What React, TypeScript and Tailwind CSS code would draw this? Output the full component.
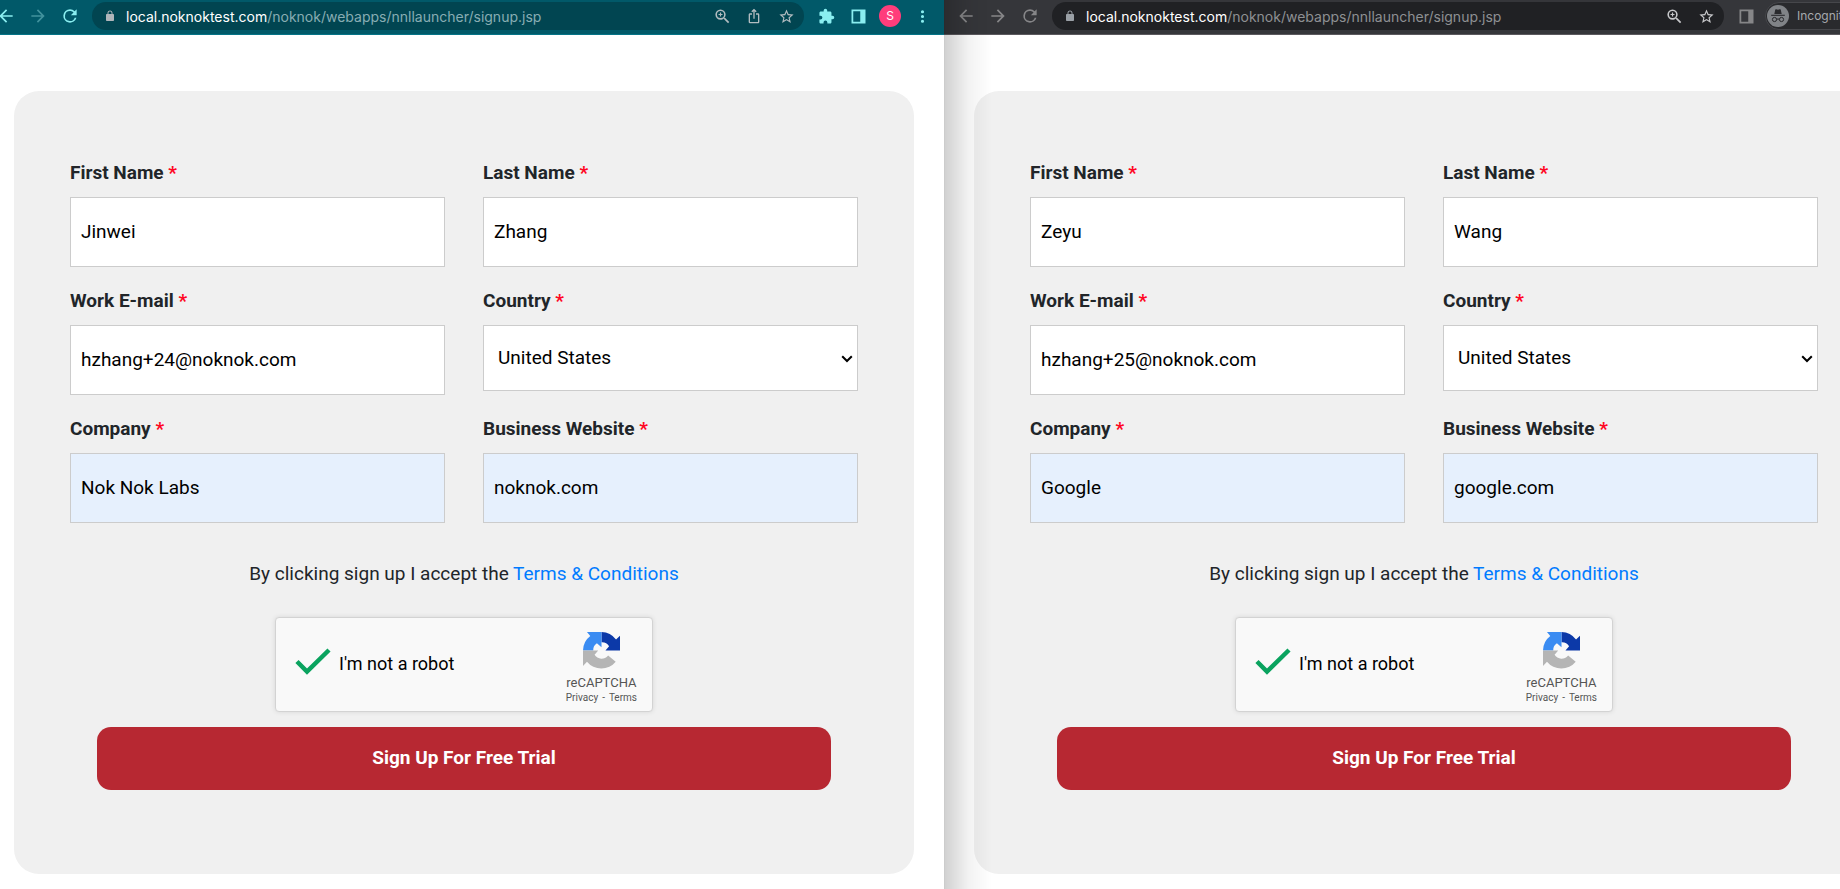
import type { ReactNode } from "react";

type FormData = {
  id: string;
  first: string;
  last: string;
  email: string;
  company: string;
  website: string;
};

const people: FormData[] = [
  {
    id: "a",
    first: "Jinwei",
    last: "Zhang",
    email: "hzhang+24@noknok.com",
    company: "Nok Nok Labs",
    website: "noknok.com",
  },
  {
    id: "b",
    first: "Zeyu",
    last: "Wang",
    email: "hzhang+25@noknok.com",
    company: "Google",
    website: "google.com",
  },
];

function Glyph({ d, className = "size-5" }: { d: string; className?: string }) {
  return (
    <svg viewBox="0 0 24 24" fill="currentColor" className={className} aria-hidden="true">
      <path d={d} />
    </svg>
  );
}

const BACK = "M20 11H7.83l5.59-5.59L12 4l-8 8 8 8 1.41-1.41L7.83 13H20z";
const FORWARD = "M12 4l-1.41 1.41L16.17 11H4v2h12.17l-5.58 5.59L12 20l8-8z";
const RELOAD =
  "M17.65 6.35A7.96 7.96 0 0 0 12 4a8 8 0 1 0 7.73 10h-2.08A6 6 0 1 1 12 6c1.66 0 3.14.69 4.22 1.78L13 11h7V4z";
const LOCK =
  "M18 8h-1V6c0-2.76-2.24-5-5-5S7 3.24 7 6v2H6c-1.1 0-2 .9-2 2v10c0 1.1.9 2 2 2h12c1.1 0 2-.9 2-2V10c0-1.1-.9-2-2-2zM8.9 6c0-1.71 1.39-3.1 3.1-3.1s3.1 1.39 3.1 3.1v2H8.9z";
const ZOOM =
  "M15.5 14h-.79l-.28-.27A6.47 6.47 0 0 0 16 9.5 6.5 6.5 0 1 0 9.5 16c1.61 0 3.09-.59 4.23-1.57l.27.28v.79l5 4.99L20.49 19zm-6 0a4.5 4.5 0 1 1 0-9 4.5 4.5 0 0 1 0 9zm.75-7h-1.5v1.75H7v1.5h1.75V12h1.5v-1.75H12v-1.5h-1.75z";
const SHARE =
  "M16 5l-1.42 1.42-1.59-1.59V16h-1.98V4.83L9.42 6.42 8 5l4-4zm4 5v11c0 1.1-.9 2-2 2H6a2 2 0 0 1-2-2V10c0-1.11.89-2 2-2h3v2H6v11h12V10h-3V8h3a2 2 0 0 1 2 2z";
const STAR =
  "M22 9.24l-7.19-.62L12 2 9.19 8.63 2 9.24l5.46 4.73L5.82 21 12 17.27 18.18 21l-1.63-7.03zM12 15.4l-3.76 2.27 1-4.28-3.32-2.88 4.38-.38L12 6.1l1.71 4.04 4.38.38-3.32 2.88 1 4.28z";
const PUZZLE =
  "M20.5 11H19V7c0-1.1-.9-2-2-2h-4V3.5a2.5 2.5 0 0 0-5 0V5H4c-1.1 0-1.99.9-1.99 2v3.8H3.5a2.7 2.7 0 0 1 0 5.4H2V20c0 1.1.9 2 2 2h3.8v-1.5a2.7 2.7 0 0 1 5.4 0V22H17c1.1 0 2-.9 2-2v-4h1.5a2.5 2.5 0 0 0 0-5z";
const PANEL = "M4 4h16v16H4zM6 6v12h8V6z";
const DOTS =
  "M12 8a2 2 0 1 0 0-4 2 2 0 0 0 0 4zm0 2a2 2 0 1 0 0 4 2 2 0 0 0 0-4zm0 6a2 2 0 1 0 0 4 2 2 0 0 0 0-4z";

function IconButton({ label, className = "", children }: { label: string; className?: string; children: ReactNode }) {
  return (
    <button type="button" aria-label={label} className={`flex size-8 shrink-0 items-center justify-center ${className}`}>
      {children}
    </button>
  );
}

function IncognitoIcon() {
  return (
    <svg viewBox="0 0 22 22" className="size-[22px] shrink-0" aria-hidden="true">
      <circle cx="11" cy="11" r="11" fill="#808387" />
      <path d="M7.3 9 8.3 4.6Q8.6 4 9.3 4.2L11 4.7l1.7-.5q.7-.2 1 .4L14.7 9z" fill="#292a2d" />
      <path d="M4.2 10.3h13.6" stroke="#292a2d" strokeWidth="1.1" />
      <g fill="none" stroke="#292a2d" strokeWidth="1">
        <circle cx="7.5" cy="14.5" r="2.1" />
        <circle cx="14.5" cy="14.5" r="2.1" />
        <path d="M9.6 14.3q1.4-.7 2.8 0" />
      </g>
    </svg>
  );
}

function Toolbar({ incognito }: { incognito: boolean }) {
  return (
    <header
      className={`flex h-[35px] items-start border-b pt-[2px] pl-[6px] ${
        incognito ? "border-[#5b595e] bg-[#35363a] text-[#868688]" : "border-[#057487] bg-[#015969] text-[#8aeef0]"
      }`}
    >
      <div className="flex h-7 w-full items-center">
        <IconButton label="Back">
          <Glyph d={BACK} />
        </IconButton>
        <IconButton label="Forward" className={incognito ? "" : "text-[#41929d]"}>
          <Glyph d={FORWARD} />
        </IconButton>
        <IconButton label="Reload">
          <Glyph d={RELOAD} />
        </IconButton>
        <div
          className={`ml-[6px] flex h-7 min-w-0 flex-1 items-center rounded-full pr-[2px] pl-3 font-[Inter,sans-serif] ${
            incognito ? "bg-[#202124] text-[#c7c8ca]" : "bg-[#014551] text-[#b2bcc0]"
          }`}
        >
          <Glyph d={LOCK} className={incognito ? "size-3 text-[#9aa0a6]" : "size-3 text-[#b0b5ba]"} />
          <span className="ml-[10px] flex-1 truncate text-[14px]">
            <span className="text-white">local.noknoktest.com</span>
            <span className={incognito ? "text-[#8e9093]" : "text-[#88adb3]"}>
              /noknok/webapps/nnllauncher/signup.jsp
            </span>
          </span>
          <IconButton label="Zoom">
            <Glyph d={ZOOM} className="size-[19px]" />
          </IconButton>
          {!incognito && (
            <IconButton label="Share">
              <Glyph d={SHARE} className="size-4" />
            </IconButton>
          )}
          <IconButton label="Bookmark">
            <Glyph d={STAR} className="size-[17px]" />
          </IconButton>
        </div>
        {incognito ? (
          <div className="ml-[6px] flex w-[174px] shrink-0 items-center">
            <IconButton label="Side panel">
              <Glyph d={PANEL} className="size-[21px]" />
            </IconButton>
            <button
              type="button"
              className="ml-[3px] flex h-7 items-center gap-2 rounded-full border border-[#46474b] bg-[#292a2d] pr-3 pl-[1px] font-[Inter,sans-serif] text-[12px] text-[#a6a9ad]"
            >
              <IncognitoIcon />
              Incognito
            </button>
          </div>
        ) : (
          <div className="mr-[6px] ml-[6px] flex shrink-0 items-center">
            <IconButton label="Extensions">
              <Glyph d={PUZZLE} className="size-[17px]" />
            </IconButton>
            <IconButton label="Side panel">
              <Glyph d={PANEL} className="size-[21px]" />
            </IconButton>
            <IconButton label="Profile">
              <span className="flex size-[22px] items-center justify-center rounded-full bg-[#ff3d7b] font-[Inter,sans-serif] text-[12px] text-white">
                S
              </span>
            </IconButton>
            <IconButton label="Menu">
              <Glyph d={DOTS} className="size-[19px]" />
            </IconButton>
          </div>
        )}
      </div>
    </header>
  );
}

function FieldLabel({ htmlFor, children }: { htmlFor: string; children: ReactNode }) {
  return (
    <label htmlFor={htmlFor} className="mb-[10px] block font-bold text-[#212529]">
      {children} <span className="text-[#ff0522]">*</span>
    </label>
  );
}

function TextField({ id, label, value, filled }: { id: string; label: string; value: string; filled?: boolean }) {
  return (
    <div>
      <FieldLabel htmlFor={id}>{label}</FieldLabel>
      <input
        id={id}
        type="text"
        defaultValue={value}
        className={`block h-[70px] w-full border border-[#cccccc] px-[10px] pb-[2px] text-black ${filled ? "bg-[#e6f0fd]" : "bg-white"}`}
      />
    </div>
  );
}

function CountryField({ id }: { id: string }) {
  return (
    <div>
      <FieldLabel htmlFor={id}>Country</FieldLabel>
      <div className="relative">
        <select
          id={id}
          defaultValue="United States"
          className="block h-[66px] w-full appearance-none border border-[#cccccc] bg-white px-[14px] text-black"
        >
          <option>United States</option>
        </select>
        <svg viewBox="0 0 12 8" className="pointer-events-none absolute top-[30px] right-[5px] h-2 w-3" fill="none" aria-hidden="true">
          <path d="M1.2 1.2 6 6l4.8-4.8" stroke="#000" strokeWidth="2" />
        </svg>
      </div>
    </div>
  );
}

function RecaptchaLogo() {
  return (
    <svg viewBox="0 0 112 112" className="size-[37px]" aria-hidden="true">
      <path fill="#0c39a8" d="M56 0A56 56 0 0 1 100 23L112 11V56H68L79 43A25 25 0 0 0 56 31z" />
      <path fill="#3b8cf2" d="M56 0H12L22 12A56 56 0 0 0 0 56H31A25 25 0 0 1 42 34L56 46z" />
      <path fill="#b5b5b5" d="M0 56V103L12 90A56 56 0 0 0 99 90L76 71A25 25 0 0 1 35 69L46 56z" />
    </svg>
  );
}

function Recaptcha({ id }: { id: string }) {
  return (
    <div className="mx-auto flex h-[95px] w-[378px] items-center rounded-[4px] border border-[#d3d3d3] bg-[#f9f9f9] pr-[15px] pl-[18px] shadow-[0_0_5px_rgba(0,0,0,0.1)]">
      <span className="relative flex h-9 w-[38px] items-center justify-center">
        <input id={id} type="checkbox" defaultChecked className="absolute inset-0 size-full appearance-none" />
        <svg viewBox="0 0 36 28" className="pointer-events-none mb-2 h-7 w-9" fill="none" aria-hidden="true">
          <path d="M2 14.5 12 24.5 34 3" stroke="#0aa35f" strokeWidth="4.5" />
        </svg>
      </span>
      <label htmlFor={id} className="ml-[7px] flex-1 pb-[2px] text-[18px] text-black">
        I'm not a robot
      </label>
      <div className="flex flex-col items-center pt-[6px] text-[#555555]">
        <RecaptchaLogo />
        <span className="mt-[5px] text-[13px] leading-[18px]">reCAPTCHA</span>
        <span className="flex gap-1 text-[10px] leading-[12px]">
          <a href="#privacy">Privacy</a>
          <span>-</span>
          <a href="#terms">Terms</a>
        </span>
      </div>
    </div>
  );
}

function SignupForm({ data }: { data: FormData }) {
  const { id } = data;
  return (
    <form
      onSubmit={(e) => e.preventDefault()}
      className="rounded-[25px] bg-[#f0f0f0] px-14 pt-[68px] pb-[84px] font-[Roboto,sans-serif] text-[19px] leading-[28px]"
    >
      <div className="grid grid-cols-2 gap-x-[38px] gap-y-5">
        <TextField id={`first-${id}`} label="First Name" value={data.first} />
        <TextField id={`last-${id}`} label="Last Name" value={data.last} />
        <TextField id={`email-${id}`} label="Work E-mail" value={data.email} />
        <CountryField id={`country-${id}`} />
        <TextField id={`company-${id}`} label="Company" value={data.company} filled />
        <TextField id={`website-${id}`} label="Business Website" value={data.website} filled />
      </div>
      <p className="mt-[37px] mb-[29px] text-center text-[#212529]">
        By clicking sign up I accept the{" "}
        <a href="#terms-conditions" className="text-[#007bff]">
          Terms &amp; Conditions
        </a>
      </p>
      <Recaptcha id={`robot-${id}`} />
      <div className="mt-[15px] px-[27px]">
        <button type="submit" className="block h-[63px] w-full rounded-[14px] bg-[#b72832] pb-[2px] font-bold text-white">
          Sign Up For Free Trial
        </button>
      </div>
    </form>
  );
}

function BrowserWindow({ data, incognito = false }: { data: FormData; incognito?: boolean }) {
  return (
    <section className="relative w-[calc(50%+40px)] shrink-0 bg-white first:-ml-4">
      <Toolbar incognito={incognito} />
      <main className="px-[30px] pt-14 pb-[15px]">
        <SignupForm data={data} />
      </main>
      {incognito && (
        <div className="pointer-events-none absolute inset-y-0 left-0 w-12 border-l border-black/20 bg-linear-to-r from-black/18 via-black/5 via-50% to-transparent" />
      )}
    </section>
  );
}

export default function App() {
  return (
    <div className="flex min-h-screen overflow-hidden bg-white">
      <BrowserWindow data={people[0]} />
      <BrowserWindow data={people[1]} incognito />
    </div>
  );
}
